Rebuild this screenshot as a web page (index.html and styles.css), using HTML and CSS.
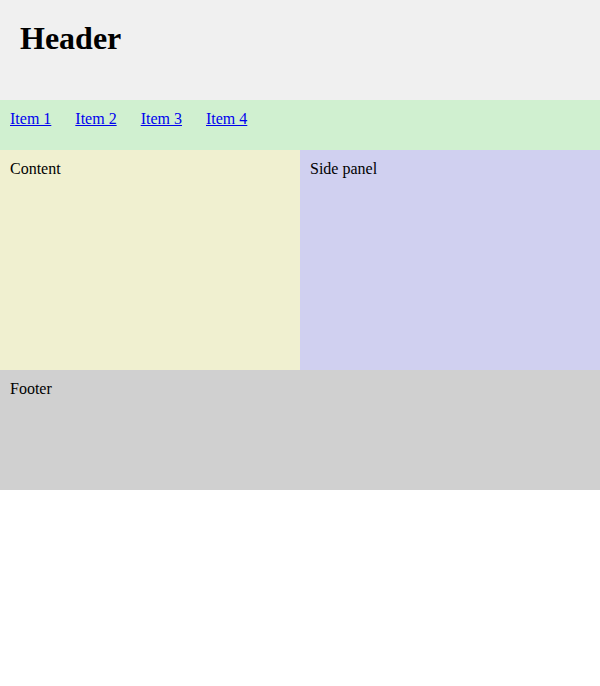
FILE: index.html
```html
<!DOCTYPE html>
<html>
<head>
<meta charset="utf-8">
<link rel="stylesheet" href="styles.css">
</head>
<body>
<div class="page">
  <header class="header"><h1 class="title">Header</h1></header>
  <nav class="nav">
    <a href="#">Item 1</a>
    <a href="#">Item 2</a>
    <a href="#">Item 3</a>
    <a href="#">Item 4</a>
  </nav>
  <div class="main">
    <div class="content">Content</div>
    <div class="side">Side panel</div>
  </div>
  <footer class="footer">Footer</footer>
</div>
</body>
</html>
```
FILE: styles.css
```css
html, body { margin: 0; padding: 0; background: #fff; }
body { font-family: "Liberation Serif", "Times New Roman", serif; font-size: 16px; color: #000; }
.header { height: 100px; box-sizing: border-box; padding: 20px; background: #f0f0f0; }
.title { margin: 0; font-size: 32px; font-weight: bold; }
.nav { height: 50px; box-sizing: border-box; padding: 10px; background: #d0f0d0; display: flex; gap: 24px; align-items: flex-start; }
.nav a { color: #0000ee; text-decoration: underline; }
.main { display: grid; grid-template-columns: 1fr 1fr; height: 220px; }
.content { background: #f0f0d0; padding: 10px; }
.side { background: #d0d0f0; padding: 10px; }
.footer { height: 120px; box-sizing: border-box; padding: 10px; background: #d0d0d0; }
```
